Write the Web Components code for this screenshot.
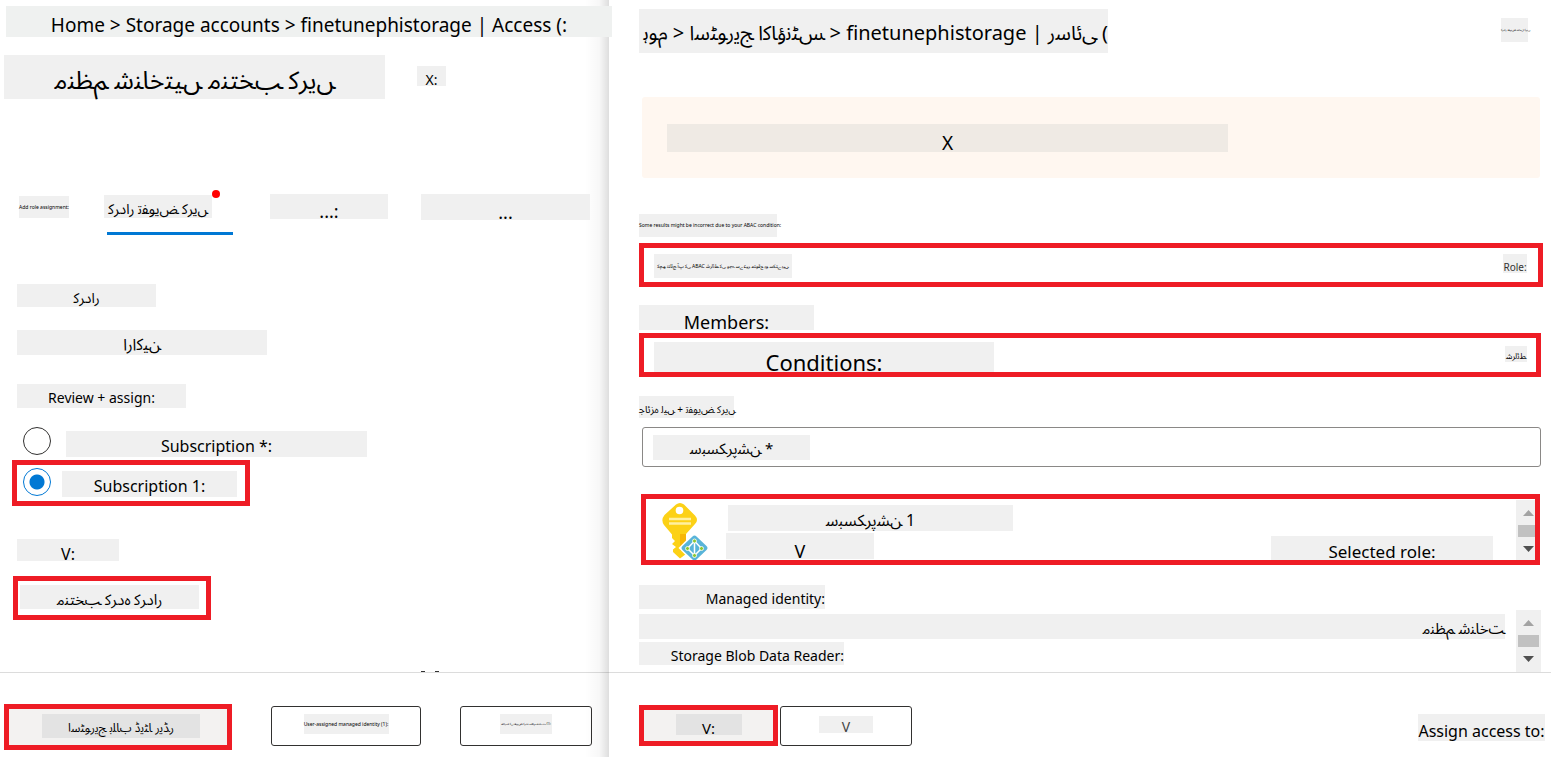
<!DOCTYPE html>
<html lang="ur">
<head>
<meta charset="utf-8">
<title>Role assignment</title>
<style>
html,body{margin:0}
body{background:#fff;color:#000;font-family:'Noto Sans','Noto Sans Arabic',sans-serif;font-size:14px}
</style>
</head>
<body>
<role-page></role-page>

<template id="chip">
<style>
:host{display:block;box-sizing:border-box;flex:none;width:var(--w,120px);height:var(--h,24px);max-width:100%;background:var(--chip,#f0f0f0);font-size:var(--size,14px);line-height:var(--h,24px);text-align:center;white-space:nowrap;direction:ltr}
:host([align=end]){text-align:right}
:host([align=start]){text-align:left}
span{display:block;padding-top:var(--drop,2px)}
:host([lang=ur]) span{unicode-bidi:bidi-override}
</style>
<span><slot></slot></span>
</template>

<template id="blade">
<style>
:host{display:flex;flex-direction:column;position:relative;min-width:0;min-height:100vh;box-sizing:border-box}
main{flex:1 0 auto;display:flex;flex-direction:column;align-items:flex-start;position:relative;z-index:1}
footer{display:flex;box-sizing:border-box;min-height:85px;border-top:1px solid #dcdcdc}
:host([edge])::after{content:"";position:absolute;top:0;right:0;bottom:0;width:24px;background:linear-gradient(to right,rgba(0,0,0,0),rgba(0,0,0,.03) 60%,rgba(0,0,0,.13));pointer-events:none}
</style>
<main><slot></slot></main>
<footer><slot name="footer"></slot></footer>
</template>

<template id="highlight">
<style>
:host{display:flex;box-sizing:border-box;border:5px solid #ee1c25;flex:none;overflow:hidden}
</style>
<slot></slot>
</template>

<template id="action">
<style>
:host{display:block;flex:none}
button{display:flex;justify-content:center;align-items:flex-start;box-sizing:border-box;width:var(--bw,132px);height:var(--bh,40px);padding:var(--inset,7px) 0 0;border:1px solid #323130;border-radius:3px;background:#fff;font:inherit;color:inherit}
:host([marked]) button{border:5px solid #ee1c25;border-radius:0;background:#f3f2f1;--chip:#e3e3e3}
</style>
<button type="button"><slot></slot></button>
</template>

<template id="track">
<style>
:host{display:flex;flex-direction:column;align-items:center;box-sizing:border-box;flex:none;width:25px;padding-top:10px;background:#f0f0f0}
svg{display:block;width:11px;height:6px}
i{display:block;width:21px;height:12px;margin:9px 0;background:#c1c1c1}
</style>
<svg viewBox="0 0 11 6"><path d="M5.500 0 11 6H0z" fill="#a3a3a3"/></svg>
<i></i>
<svg viewBox="0 0 11 6"><path d="M0 0H11L5.500 6z" fill="#505050"/></svg>
</template>

<template id="key">
<style>:host{display:block;flex:none;width:48px;height:60px}svg{display:block}</style>
<svg width="48" height="60" viewBox="0 0 48 60" aria-hidden="true">
<path d="M15 4.500Q19 1.500 23 4.500L34 15.500Q38 20 34 24L25 34V54L19 58.500 12 52V49.500L15 47 11 44 14 41 11 38V34.500L3 25Q-.500 20 3.500 15Z" fill="#fcd116"/>
<path d="M19 34H25V46L19 51z" fill="#f5a800" opacity=".65"/>
<circle cx="18.500" cy="10.500" r="3.800" fill="#fff"/>
<path d="M8 19H30M8 23.500H30" stroke="#fff0a0" stroke-width="2.600"/>
<path d="M33.500 32 49.500 48 33.500 64 17.500 48z" fill="#fff"/>
<path d="M31.500 36.500Q33.500 34.500 35.500 36.500L45.500 46Q47.500 48 45.500 50L35.500 59.500Q33.500 61.500 31.500 59.500L21.500 50Q19.500 48 21.500 46z" fill="#59b4d9"/>
<path d="M33.500 41 26.500 48.500 33.500 55.500 40.500 48.500zM33.500 41V55" fill="none" stroke="#fff" stroke-width="1.500"/>
<g fill="#8cc832" stroke="#fff" stroke-width=".8"><circle cx="33.500" cy="41" r="2"/><circle cx="26.500" cy="48.500" r="2"/><circle cx="40.500" cy="48.500" r="2"/><circle cx="33.500" cy="55.500" r="2"/></g>
</svg>
</template>

<template id="page">
<style>
:host{display:grid;grid-template-columns:minmax(0,609fr) minmax(0,942fr);min-height:100vh;overflow:hidden}
.row{display:flex;align-items:flex-start}
.title{margin:6px 0 0 6px;max-width:none;--w:606px;--h:31px;--size:19px;--drop:4px;--chip:#eff1f0}
.heading{margin:18px 0 0 4px;align-items:center}
h1{margin:0;font:inherit}
.tabs{margin:95px 0 0 19px}
.tabs button{position:relative;display:block;padding:0;border:0;background:none;font:inherit;color:inherit}
.tabs .on{margin-left:35px;padding:1px 22px 14px 0}
.on::before{content:"";position:absolute;top:-4px;left:108px;width:8px;height:8px;border-radius:50%;background:#f00}
.on::after{content:"";position:absolute;left:3px;right:1px;bottom:-3px;height:3px;background:#0078d4}
.field{margin-left:17px}
.choice{display:flex;align-items:center}
input[type=radio]{appearance:none;box-sizing:border-box;flex:none;width:28px;height:28px;margin:0;border:1px solid #323130;border-radius:50%;background:#fff}
input[type=radio]:checked{border-color:#0078d4;background:radial-gradient(circle,#0078d4 7px,#fff 8px)}
.crumbs{max-width:none}
.right{align-self:stretch;margin:0 10px 0 30px}
.spread{justify-content:space-between}
.banner{margin:44px 11px 0 33px;align-self:stretch;box-sizing:border-box;height:81px;padding:27px 25px;border-radius:3px;background:#fff7f0}
.box{box-sizing:border-box;height:40px;padding:7px 10px;border:1px solid #8a8886;border-radius:3px;background:#fff}
.box input{display:block;box-sizing:border-box;width:157px;height:25px;margin:0;padding:2px 0 0;border:0;background:#f0f0f0;font:15px/23px 'Noto Sans','Noto Sans Arabic',sans-serif;text-align:center;direction:ltr}
.assign{margin:0 6px 0 auto}
.cut{display:flex;gap:10px;margin:auto 0 0 421px}
.cut i{width:4px;height:1px;background:#333}
</style>

<app-blade edge>
  <text-chip class="title">Home &gt; Storage accounts &gt; finetunephistorage | Access (:</text-chip>
  <div class="row heading">
    <h1><text-chip lang="ur" style="--w:381px;--h:44px;--size:25px">منظم شناختیں منتخب کریں</text-chip></h1>
    <text-chip style="--w:29px;--h:20px;--drop:4px;margin:-2px 0 0 32px">X:</text-chip>
  </div>
  <div class="row tabs" role="tablist">
    <button type="button" role="tab"><text-chip style="--w:50px;--h:22px;--size:5px;--drop:0px;margin-top:2px">Add role assignment:</text-chip></button>
    <button type="button" role="tab" class="on" aria-selected="true"><text-chip lang="ur" style="--w:108px;--h:23px">کردار تفویض کریں</text-chip></button>
    <button type="button" role="tab" style="margin-left:36px"><text-chip style="--w:118px;--h:25px;--size:18px;--drop:5px">...:</text-chip></button>
    <button type="button" role="tab" style="margin-left:33px"><text-chip style="--w:169px;--h:26px;--size:18px;--drop:5px">...</text-chip></button>
  </div>
  <text-chip class="field" lang="ur" style="--w:139px;--h:23px;margin-top:52px">کردار</text-chip>
  <text-chip class="field" lang="ur" style="--w:250px;--h:25px;--size:16px;margin-top:23px">اراکین</text-chip>
  <text-chip class="field" style="--w:169px;margin-top:29px">Review + assign:</text-chip>
  <label class="choice" style="margin:17px 0 0 23px;gap:15px"><input type="radio" name="member"><text-chip style="--w:301px;--h:26px;--size:16px;margin-top:6px">Subscription *:</text-chip></label>
  <mark-box style="margin:3px 0 0 12px;width:238px;height:46px;padding-left:6px">
    <label class="choice" style="gap:11px"><input type="radio" name="member" checked style="margin-bottom:2px"><text-chip style="--w:175px;--h:26px;--size:16px;margin-top:2px">Subscription 1:</text-chip></label>
  </mark-box>
  <text-chip class="field" style="--w:102px;--h:22px;--size:16px;--drop:4px;margin-top:33px">V:</text-chip>
  <mark-box style="margin:15px 0 0 13px;width:198px;height:44px;padding:4px 0 0 2px">
    <text-chip lang="ur" style="--w:179px;--size:15px">منتخب کردہ کردار</text-chip>
  </mark-box>
  <div class="cut" aria-hidden="true"><i></i><i></i></div>
  <div slot="footer" class="row" style="align-items:center;gap:39px;height:46px;margin:31px 0 0 4px">
    <action-button marked style="--bw:228px;--bh:46px;--inset:5px"><text-chip lang="ur" style="--w:158px;--size:12px;margin-left:6px">اسٹوریج بلاب ڈیٹا ریڈر</text-chip></action-button>
    <action-button style="--bw:150px;margin-top:-2px"><text-chip style="--w:85px;--h:20px;--size:5px;--drop:0px">User-assigned managed identity (1):</text-chip></action-button>
    <action-button style="margin-top:-2px"><text-chip lang="ur" style="--w:52px;--h:20px;--size:3px;--drop:0px">صارف کی تفویض کردہ منظم شناخت (1):</text-chip></action-button>
  </div>
</app-blade>

<app-blade>
  <div class="row spread" style="align-self:stretch;margin:9px 23px 0 30px">
    <text-chip class="crumbs" lang="ur" align="end" style="--w:469px;--h:44px;--size:20px">ہوم &gt; اسٹوریج اکاؤنٹس &gt; finetunephistorage | رسائی (</text-chip>
    <text-chip lang="ur" align="start" style="--w:27px;--h:24px;--size:3px;--drop:0px;margin-top:9px">کردار تفویض شامل کریں</text-chip>
  </div>
  <div class="banner"><text-chip style="--w:561px;--h:28px;--size:19px;--drop:5px;--chip:#efeae4">X</text-chip></div>
  <text-chip class="right" align="start" style="--w:138px;--h:23px;--size:5px;--drop:0px;align-self:auto;margin-top:36px">Some results might be incorrect due to your ABAC condition:</text-chip>
  <mark-box class="right spread" style="height:44px;margin-top:6px;margin-right:8px;padding:6px 11px 0 10px">
    <text-chip lang="ur" style="--w:138px;--size:5px;--drop:0px">کچھ نتائج آپ کی ABAC شرائط کی وجہ سے غیر متوقع ہو سکتے ہیں</text-chip>
    <text-chip style="--w:24px;--h:19px;--size:10px;--drop:4px;color:#333">Role:</text-chip>
  </mark-box>
  <text-chip class="right" style="--w:175px;--h:25px;--size:18px;--drop:5px;align-self:auto;margin-top:18px">Members:</text-chip>
  <mark-box class="right spread" style="height:44px;margin-top:3px;padding:4px 9px 0 10px">
    <text-chip style="--w:340px;--h:30px;--size:22px;--drop:5px">Conditions:</text-chip>
    <text-chip lang="ur" style="--w:22px;--h:16px;--size:8px;margin-top:4px">شرائط</text-chip>
  </mark-box>
  <text-chip class="right" lang="ur" style="--w:95px;--h:22px;--size:10px;align-self:auto;margin-top:19px">جائزہ لیں + تفویض کریں</text-chip>
  <div class="right box" style="margin:9px 10px 0 33px"><input type="text" lang="ur" aria-label="Subscription" value="سبسکرپشن *"></div>
  <mark-box class="right" style="height:71px;margin:27px 11px 0 32px">
    <key-icon style="margin:1px 0 0 15px"></key-icon>
    <div style="margin:6px 0 0 17px">
      <text-chip lang="ur" style="--w:285px;--h:26px;--size:16px;margin-left:2px">سبسکرپشن 1</text-chip>
      <text-chip style="--w:148px;--h:26px;--size:18px;--drop:5px;margin-top:2px">V</text-chip>
    </div>
    <text-chip style="--w:222px;--h:24px;--size:17px;--drop:4px;margin:37px 23px 0 auto">Selected role:</text-chip>
    <scroll-track style="margin:1px -6px 0 0"></scroll-track>
  </mark-box>
  <text-chip class="right" align="end" style="--w:186px;align-self:auto;margin-top:20px">Managed identity:</text-chip>
  <div class="right row" style="margin-top:1px;height:62px">
    <div style="flex:1;min-width:0;padding-top:4px">
      <text-chip lang="ur" align="end" style="--w:auto;--h:25px;--size:15px;margin-right:11px">منظم شناخت</text-chip>
      <text-chip align="end" style="--w:205px;--h:23px;margin-top:3px">Storage Blob Data Reader:</text-chip>
    </div>
    <scroll-track style="height:62px"></scroll-track>
  </div>
  <div slot="footer" class="row" style="flex:1;gap:2px;margin:32px 0 0 30px">
    <action-button marked style="--bw:139px;--bh:41px;--inset:4px"><text-chip style="--w:66px;--h:21px;--size:15px;--drop:4px">V:</text-chip></action-button>
    <action-button style="--inset:9px;margin-top:1px"><text-chip style="--w:54px;--h:17px;color:#444">V</text-chip></action-button>
    <text-chip class="assign" style="--w:127px;--h:27px;--size:16px;--drop:4px;margin-top:9px">Assign access to:</text-chip>
  </div>
</app-blade>
</template>

<script>
// Contextual glyph runs: isolated, final, initial and medial forms are consecutive.
const FORMS={'ا':0xFE8D,'ب':0xFE8F,'پ':0xFB56,'ت':0xFE95,'ٹ':0xFB66,'ج':0xFE9D,'چ':0xFB7A,'خ':0xFEA5,'د':0xFEA9,'ڈ':0xFB88,'ر':0xFEAD,'ز':0xFEAF,'س':0xFEB1,'ش':0xFEB5,'ص':0xFEB9,'ض':0xFEBD,'ط':0xFEC1,'ظ':0xFEC5,'ع':0xFEC9,'غ':0xFECD,'ف':0xFED1,'ق':0xFED5,'ک':0xFB8E,'ل':0xFEDD,'م':0xFEE1,'ن':0xFEE5,'ں':0xFB9E,'و':0xFEED,'ؤ':0xFE85,'ہ':0xFBA6,'ھ':0xFBAA,'ی':0xFBFC,'ے':0xFBAE,'ئ':0xFE89,'آ':0xFE81};
const NO_JOIN='ادڈرزںوؤےآ';
function shape(text){
  const a=[...text];
  return a.map((c,i)=>{
    if(!(c in FORMS))return c;
    const before=a[i-1] in FORMS&&!NO_JOIN.includes(a[i-1]);
    const after=!NO_JOIN.includes(c)&&a[i+1] in FORMS;
    return String.fromCharCode(FORMS[c]+(after?(before?3:2):(before?1:0)));
  }).join('');
}
function define(name,id,ready){
  customElements.define(name,class extends HTMLElement{
    constructor(){
      super();
      this.attachShadow({mode:'open'}).append(document.getElementById(id).content.cloneNode(true));
    }
    connectedCallback(){
      if(ready&&!this.isReady){this.isReady=true;ready(this);}
    }
  });
}
define('text-chip','chip',el=>{if(el.lang==='ur')el.textContent=shape(el.textContent);});
define('app-blade','blade');
define('mark-box','highlight');
define('action-button','action');
define('scroll-track','track');
define('key-icon','key');
define('role-page','page',el=>{
  for(const input of el.shadowRoot.querySelectorAll('input[lang=ur]'))input.value='\u202D'+shape(input.value);
});
</script>
</body>
</html>
